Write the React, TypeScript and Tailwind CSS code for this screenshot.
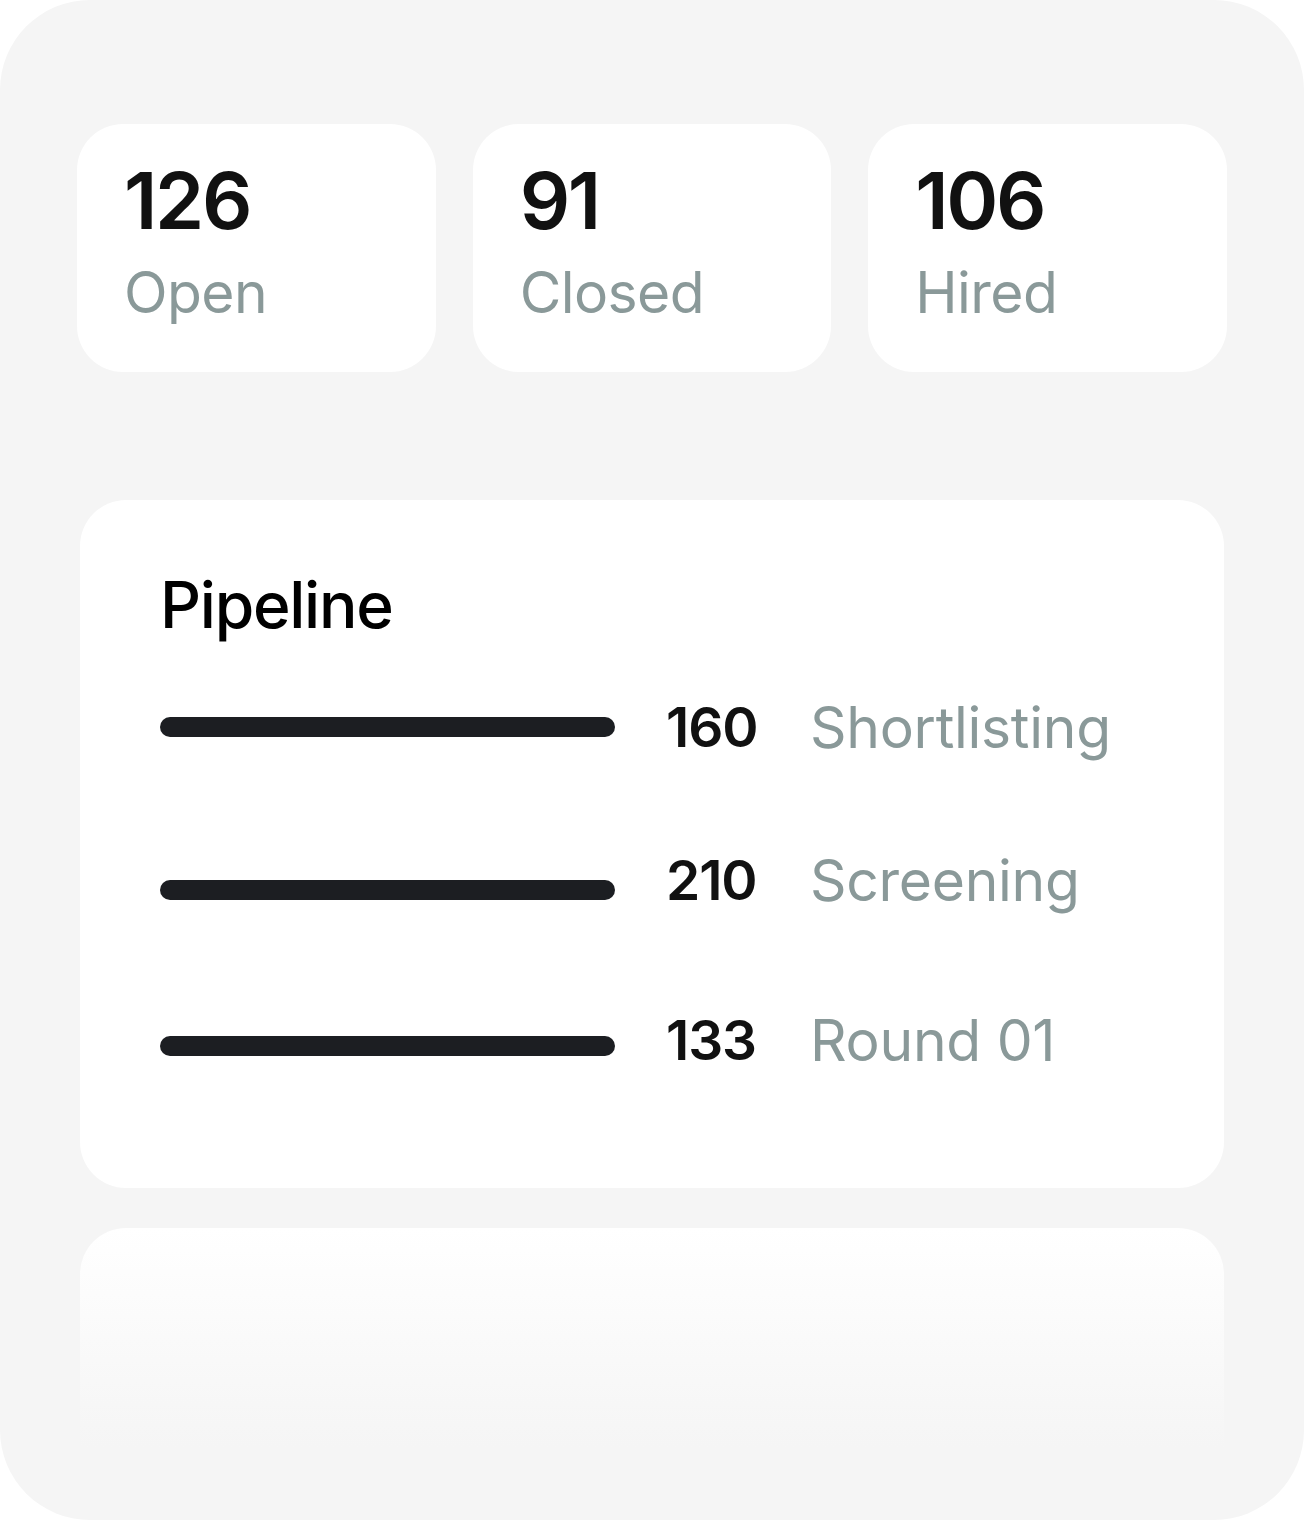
const STATS = [
  { value: "126", label: "Open" },
  { value: "91", label: "Closed" },
  { value: "106", label: "Hired" },
]

const STAGES = [
  { count: "160", label: "Shortlisting", rowClass: "mt-[60px]", barClass: "" },
  { count: "210", label: "Screening", rowClass: "mt-[93px]", barClass: "translate-y-[10px]" },
  { count: "133", label: "Round 01", rowClass: "mt-[100px]", barClass: "translate-y-[6px]" },
]

function StatCard({ value, label }: { value: string; label: string }) {
  return (
    <div className="flex h-[248px] flex-col rounded-[46px] bg-white px-[47px] pt-[37px]">
      <span className="text-[79px] font-semibold leading-none tracking-[-0.03em] text-[#111111]">{value}</span>
      <span className="mt-[24px] text-[57px] leading-none tracking-[-0.01em] text-[#8a9999]">{label}</span>
    </div>
  )
}

export default function App() {
  return (
    <div className="bg-white" style={{ fontFamily: "Inter, 'Noto Sans', sans-serif" }}>
      <div className="flex h-[1520px] w-[1304px] flex-col overflow-hidden rounded-[90px] bg-[#f5f5f5] pt-[124px]">
        {/* Stats row */}
        <div className="grid grid-cols-3 gap-[37px] px-[77px]">
          {STATS.map((s) => (
            <StatCard key={s.label} {...s} />
          ))}
        </div>

        {/* Pipeline */}
        <div className="mx-[80px] mt-[128px] flex h-[688px] flex-col rounded-[46px] bg-white pl-[80px] pt-[73px]">
          <h2 className="text-[64px] font-medium leading-none tracking-[-0.02em] text-black">Pipeline</h2>
          {STAGES.map((st) => (
            <div key={st.label} className={`flex h-[60px] items-center ${st.rowClass}`}>
              <div className={`h-[20px] w-[455px] rounded-full bg-[#1c1e22] ${st.barClass}`} />
              <span className="ml-[51px] w-[144px] text-[55px] font-semibold leading-none tracking-[-0.02em] text-[#111111]">
                {st.count}
              </span>
              <span className="text-[57px] leading-none tracking-[-0.005em] text-[#8a9999]">{st.label}</span>
            </div>
          ))}
        </div>

        {/* Faded card */}
        <div className="mx-[80px] mt-[40px] h-[220px] rounded-t-[46px] bg-linear-to-b from-white to-[#f5f5f5]" />
      </div>
    </div>
  )
}
